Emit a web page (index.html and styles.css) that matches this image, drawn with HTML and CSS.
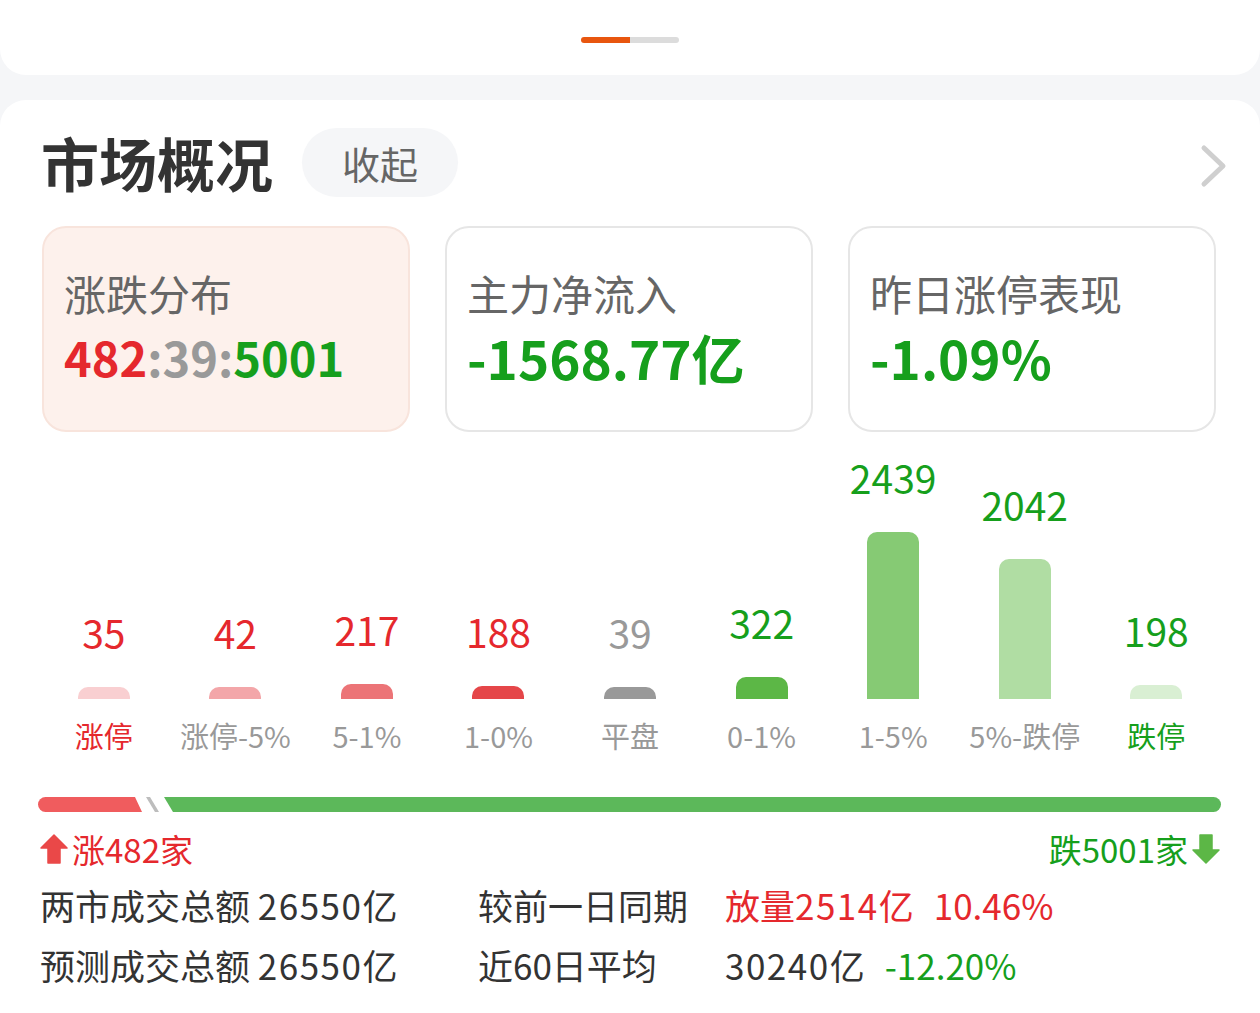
FILE: index.html
```html
<!DOCTYPE html>
<html lang="zh-CN">
<head>
    <meta charset="UTF-8">
    <title>市场概况</title>
    <link rel="stylesheet" href="styles.css">
</head>
<body>
<div class="top-card">
    <div class="pager">
        <span class="pager__active"></span>
        <span class="pager__rest"></span>
    </div>
</div>

<div class="market">
    <div class="market__head">
        <h1 class="market__title">市场概况</h1>
        <span class="market__toggle">收起</span>
        <svg class="market__more" width="32" height="46" viewBox="0 0 32 46">
            <path d="M6 5 L25 23 L6 41" fill="none" stroke="#cfcfcf" stroke-width="5" stroke-linecap="round" stroke-linejoin="round"/>
        </svg>
    </div>

    <div class="cards">
        <div class="card card--active">
            <div class="card__label">涨跌分布</div>
            <div class="card__value card__value--ratio"><span class="up">482</span><span class="flat">:39:</span><span class="down">5001</span></div>
        </div>
        <div class="card">
            <div class="card__label">主力净流入</div>
            <div class="card__value down">-1568.77亿</div>
        </div>
        <div class="card">
            <div class="card__label">昨日涨停表现</div>
            <div class="card__value down">-1.09%</div>
        </div>
    </div>

    <div class="chart">
        <div class="chart__col">
            <span class="chart__num up">35</span>
            <div class="chart__bar bar-1" style="height: 12px"></div>
            <span class="chart__name chart__name--up">涨停</span>
        </div>
        <div class="chart__col">
            <span class="chart__num up">42</span>
            <div class="chart__bar bar-2" style="height: 12px"></div>
            <span class="chart__name">涨停-5%</span>
        </div>
        <div class="chart__col">
            <span class="chart__num up">217</span>
            <div class="chart__bar bar-3" style="height: 15px"></div>
            <span class="chart__name">5-1%</span>
        </div>
        <div class="chart__col">
            <span class="chart__num up">188</span>
            <div class="chart__bar bar-4" style="height: 13px"></div>
            <span class="chart__name">1-0%</span>
        </div>
        <div class="chart__col">
            <span class="chart__num flat">39</span>
            <div class="chart__bar bar-5" style="height: 12px"></div>
            <span class="chart__name">平盘</span>
        </div>
        <div class="chart__col">
            <span class="chart__num down">322</span>
            <div class="chart__bar bar-6" style="height: 22px"></div>
            <span class="chart__name">0-1%</span>
        </div>
        <div class="chart__col">
            <span class="chart__num down">2439</span>
            <div class="chart__bar bar-7" style="height: 167px"></div>
            <span class="chart__name">1-5%</span>
        </div>
        <div class="chart__col">
            <span class="chart__num down">2042</span>
            <div class="chart__bar bar-8" style="height: 140px"></div>
            <span class="chart__name">5%-跌停</span>
        </div>
        <div class="chart__col">
            <span class="chart__num down">198</span>
            <div class="chart__bar bar-9" style="height: 14px"></div>
            <span class="chart__name chart__name--down">跌停</span>
        </div>
    </div>

    <div class="ratio">
        <div class="ratio__up" style="width: 104px"></div>
        <div class="ratio__flat"></div>
        <div class="ratio__down"></div>
    </div>

    <div class="legend">
        <span class="legend__item up">
            <svg width="28" height="30" viewBox="0 0 28 30"><path d="M14 1 L27 14 L20 14 L20 29 L8 29 L8 14 L1 14 Z" fill="#ea4848" stroke="#ea4848" stroke-width="1.5" stroke-linejoin="round"/></svg>
            涨482家
        </span>
        <span class="legend__item down">
            跌5001家
            <svg width="28" height="30" viewBox="0 0 28 30"><path d="M14 29 L27 16 L20 16 L20 1 L8 1 L8 16 L1 16 Z" fill="#5cb746" stroke="#5cb746" stroke-width="1.5" stroke-linejoin="round"/></svg>
        </span>
    </div>

    <div class="stats">
        <div class="stats__row">
            <span class="stats__a">两市成交总额 <span class="stats__num">26550</span>亿</span>
            <span class="stats__b">较前一日同期</span>
            <span class="stats__c"><span class="up">放量<span class="stats__num">2514</span>亿</span><span class="up stats__pct">10.46%</span></span>
        </div>
        <div class="stats__row">
            <span class="stats__a">预测成交总额 <span class="stats__num">26550</span>亿</span>
            <span class="stats__b">近60日平均</span>
            <span class="stats__c"><span class="stats__num">30240</span>亿<span class="down stats__pct">-12.20%</span></span>
        </div>
    </div>
</div>
</body>
</html>
```

FILE: styles.css
```css
body {
    margin: 0;
    background: #f5f6f8;
    font-family: "Noto Sans CJK SC", "Noto Sans", sans-serif;
    color: #333;
}

.up {
    color: #e5282d;
}

.down {
    color: #169f1c;
}

.flat {
    color: #999;
}

.top-card {
    height: 75px;
    background: #fff;
    border-radius: 0 0 26px 26px;
    display: flex;
    justify-content: center;
    align-items: center;
}

.pager {
    display: flex;
    margin-top: 5px;
}

.pager__active, .pager__rest {
    width: 49px;
    height: 6px;
}

.pager__active {
    background: #e8560f;
    border-radius: 3px 0 0 3px;
}

.pager__rest {
    background: #dcdcdc;
    border-radius: 0 3px 3px 0;
}

.market {
    margin-top: 25px;
    background: #fff;
    border-radius: 26px 26px 0 0;
    padding: 28px 40px 20px;
    min-height: 870px;
    box-sizing: border-box;
}

.market__head {
    display: flex;
    align-items: center;
    height: 69px;
}

.market__title {
    margin: 0 29px 0 1px;
    font-size: 58px;
    font-weight: bold;
    color: #333;
    line-height: 69px;
}

.market__toggle {
    height: 69px;
    width: 156px;
    border-radius: 35px;
    background: #f5f6f8;
    color: #666;
    font-size: 38px;
    display: flex;
    align-items: center;
    justify-content: center;
}

.market__more {
    margin-left: auto;
    margin-right: -10px;
    margin-top: 6px;
}

.cards {
    display: flex;
    gap: 35px;
    margin: 29px 4px 0 2px;
}

.card {
    flex: 1;
    height: 206px;
    box-sizing: border-box;
    border: 2px solid #e6e6e6;
    border-radius: 24px;
    padding: 36px 0 0 20px;
}

.card--active {
    background: #fdf1ec;
    border-color: #f8e4dc;
}

.card__label {
    font-size: 42px;
    line-height: 58px;
    color: #666;
}

.card__value {
    margin-top: 5px;
    font-size: 53px;
    line-height: 60px;
    font-weight: bold;
}

.card__value--ratio {
    font-size: 47px;
}

.chart {
    display: flex;
    align-items: flex-end;
    margin: 21px -2px 0;
}

.chart__col {
    flex: 1;
    display: flex;
    flex-direction: column;
    align-items: center;
}

.chart__num {
    font-size: 39px;
    line-height: 48px;
    margin-bottom: 31px;
}

.chart__bar {
    width: 52px;
    border-radius: 10px 10px 0 0;
}

.chart__name {
    margin-top: 16px;
    font-size: 29px;
    line-height: 40px;
    color: #999;
}

.chart__name--up {
    color: #e5282d;
}

.chart__name--down {
    color: #169f1c;
}

.bar-1 { background: #f9cfd1; }
.bar-2 { background: #f3a6a9; }
.bar-3 { background: #ec7477; }
.bar-4 { background: #e54649; }
.bar-5 { background: #999; }
.bar-6 { background: #5cb746; }
.bar-7 { background: #86ca74; }
.bar-8 { background: #b0dda3; }
.bar-9 { background: #d9efd3; }

.ratio {
    display: flex;
    height: 15px;
    margin: 42px -1px 0 -2px;
}

.ratio__up {
    background: #f05c5e;
    border-radius: 8px 0 0 8px;
    clip-path: polygon(0 0, calc(100% - 7px) 0, 100% 100%, 0 100%);
}

.ratio__flat {
    width: 13px;
    margin-left: 4px;
    background: #bdbdbd;
    clip-path: polygon(0 0, 4px 0, 100% 100%, calc(100% - 4px) 100%);
}

.ratio__down {
    flex: 1;
    margin-left: 5px;
    background: #5cb85a;
    border-radius: 0 8px 8px 0;
    clip-path: polygon(0 0, 100% 0, 100% 100%, 9px 100%);
}

.legend {
    display: flex;
    justify-content: space-between;
    margin-top: 15px;
    font-size: 33px;
    line-height: 44px;
}

.legend__item {
    display: flex;
    align-items: center;
    gap: 4px;
}

.stats {
    margin-top: 4px;
    font-size: 35px;
}

.stats__num {
    letter-spacing: 1.5px;
}

.stats__row {
    display: flex;
    line-height: 60px;
}

.stats__a {
    width: 438px;
}

.stats__b {
    width: 247px;
}

.stats__pct {
    margin-left: 20px;
}
```
